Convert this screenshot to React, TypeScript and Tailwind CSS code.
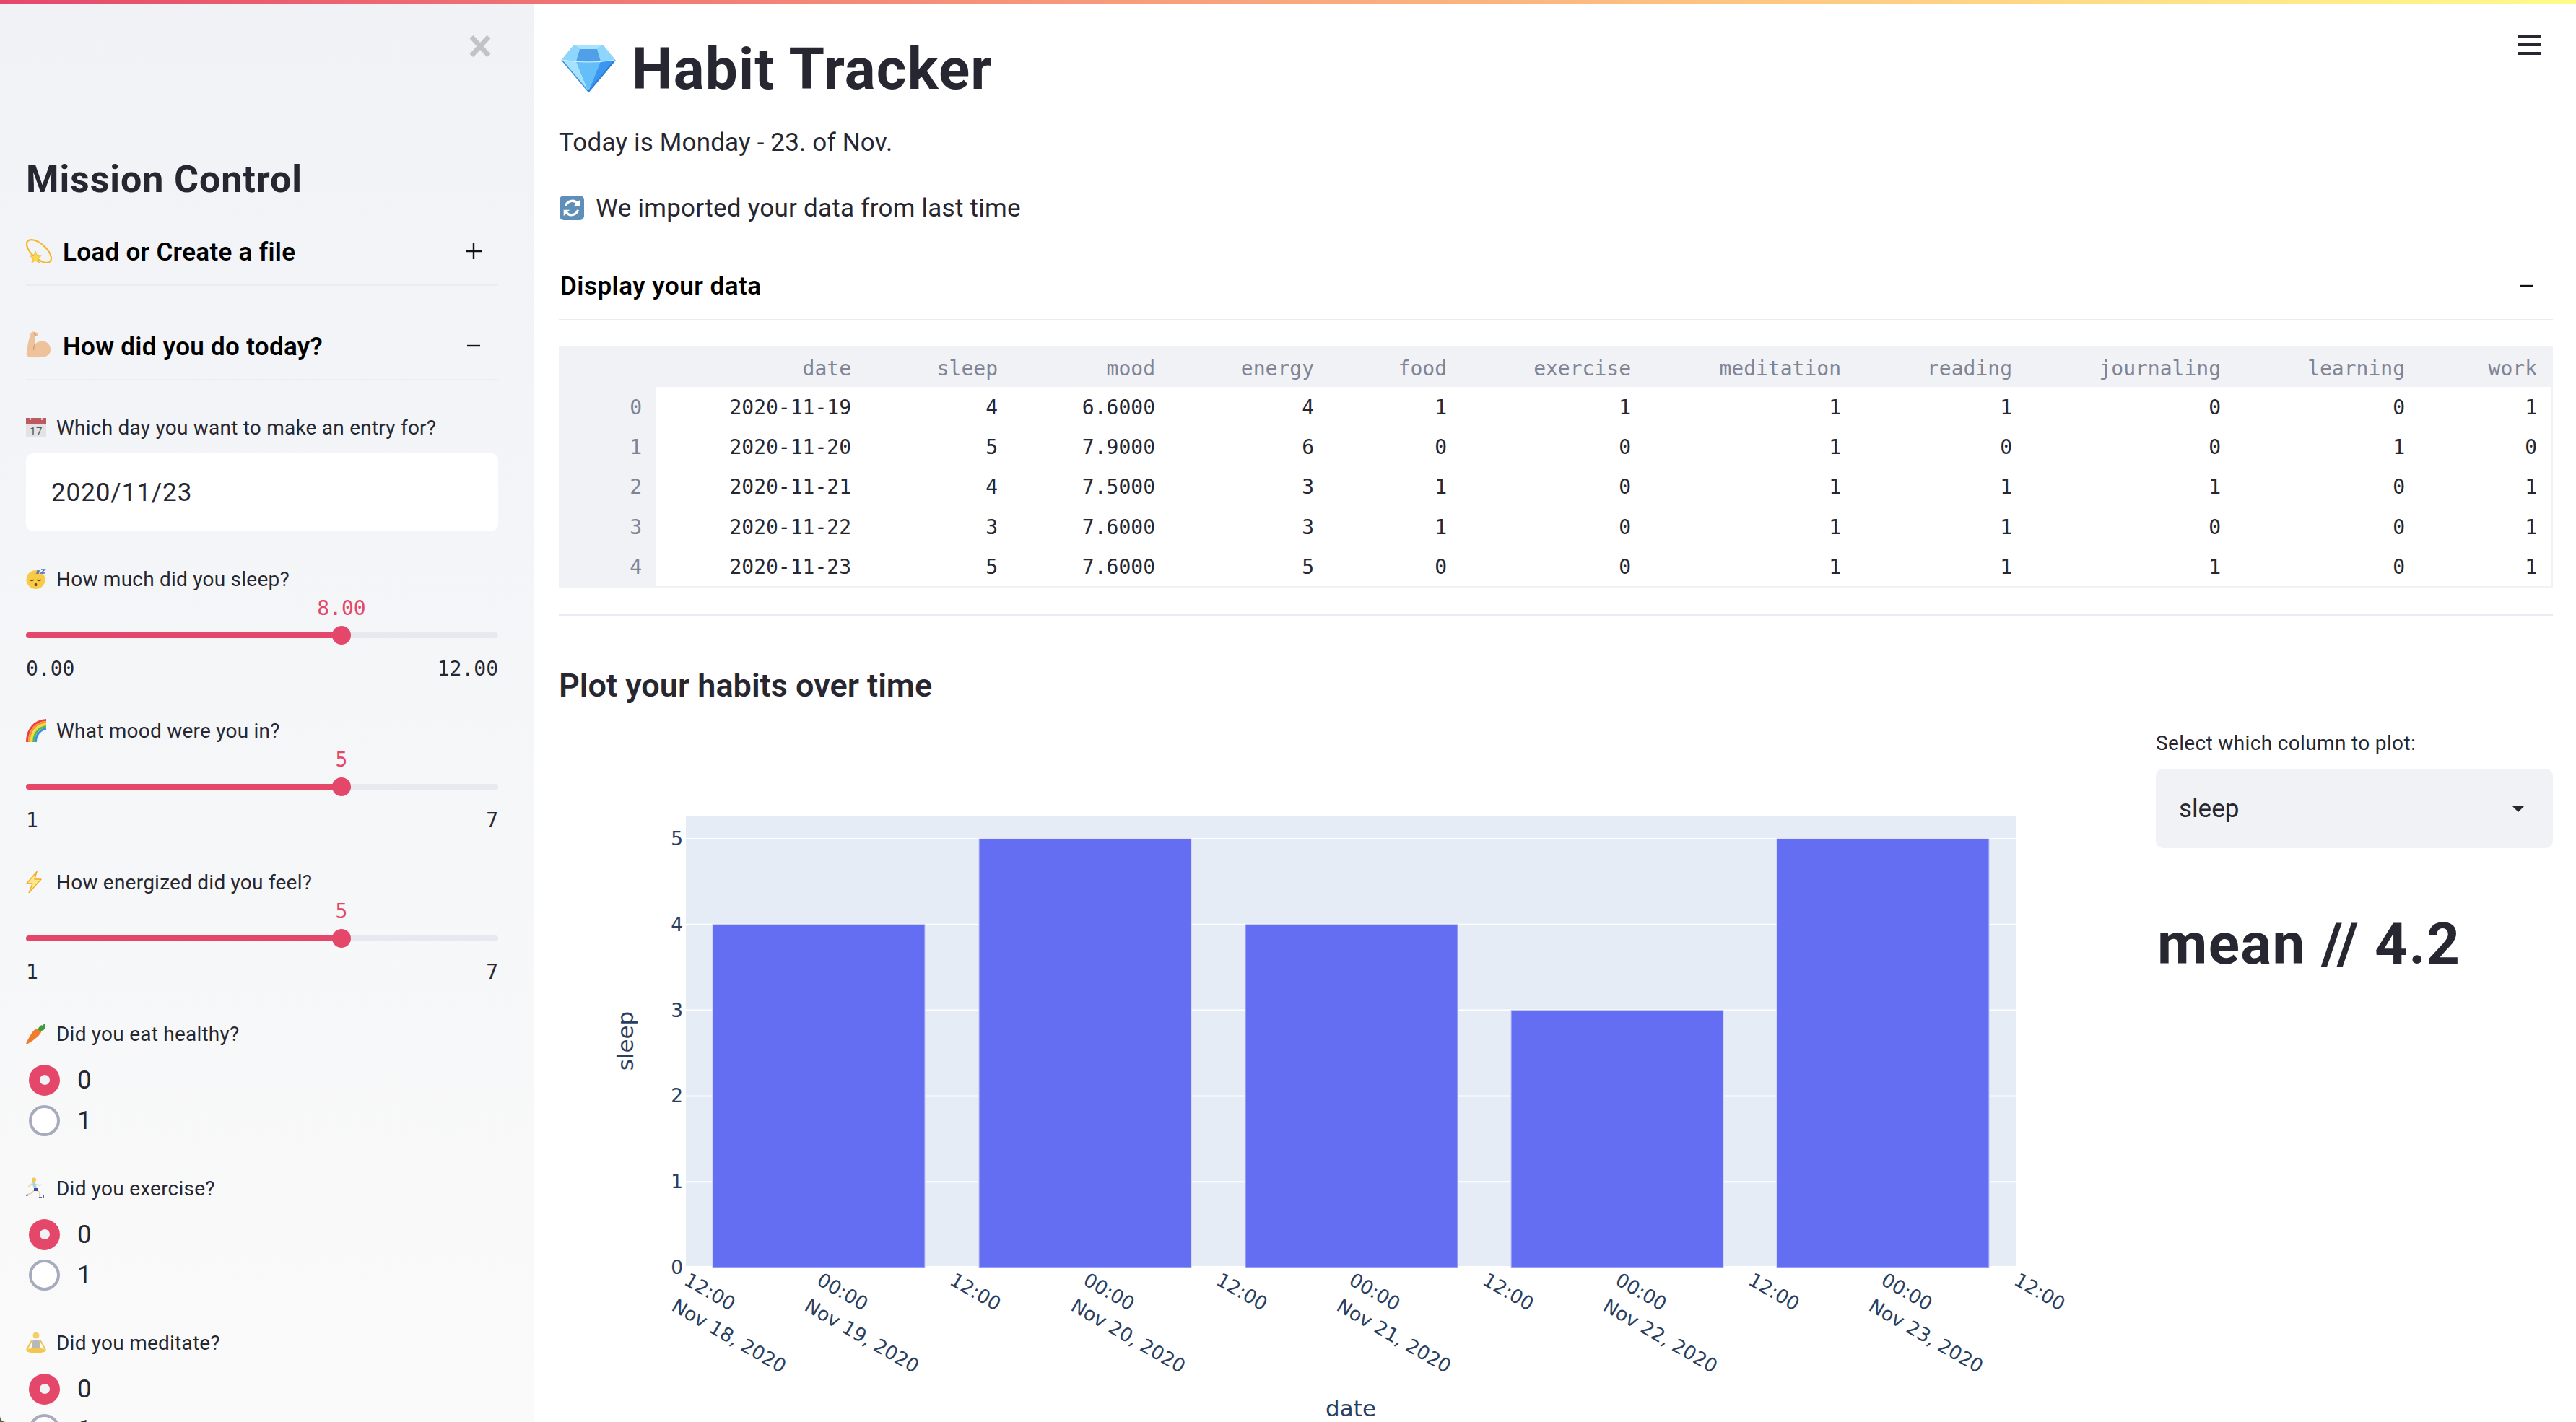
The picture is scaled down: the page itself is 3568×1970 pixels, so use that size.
import type { ReactNode } from 'react'

// --- emoji drawings (no colour emoji font in the sandbox) ---
const Dizzy = () => (
  <svg viewBox="0 0 36 40" className="w-[36px] h-[40px] shrink-0">
    <ellipse cx="18" cy="20" rx="21" ry="10" transform="rotate(42 18 20)" fill="none" stroke="#f5b82e" strokeWidth="2.2" />
    <path d="M13 20l2.5 5.5 6 .5-4.5 4 1.5 6-5.5-3-5 3 1.500-6-4.500-4 6-.5z" fill="#fbd84b" stroke="#e8a020" strokeWidth=".6" />
  </svg>
)
const Muscle = () => (
  <svg viewBox="0 0 34 40" className="w-[34px] h-[40px] shrink-0">
    <path d="M8 1c3-1 7 0 8 2 1 2 0 4-2 4l-2 0c0 3 0 7 1 10 3-3 8-4 12-3 5 1 9 5 9 11 0 6-3 9-8 10-7 1-17 2-23 0-2-1-3-3-2-6 1-7 2-15 4-21 1-3 1-5 3-7z" fill="#eec39b" />
    <path d="M13 17c-2 3-3 6-2 9M11 3l3 3" fill="none" stroke="#cf9a6c" strokeWidth="1.200" />
  </svg>
)
const Calendar = () => (
  <svg viewBox="0 0 28 28" className="w-[28px] h-[28px] shrink-0">
    <rect x="0" y="1" width="28" height="27" fill="#e3e3e3" />
    <rect x="0" y="1" width="28" height="9" fill="#bd5a5f" />
    <circle cx="6" cy="2.500" r="1.300" fill="#fff" />
    <circle cx="22" cy="2.500" r="1.300" fill="#fff" />
    <text x="14" y="25" textAnchor="middle" fontSize="15" fill="#555" fontFamily="Roboto, sans-serif">17</text>
  </svg>
)
const Sleeping = () => (
  <svg viewBox="0 0 28 28" className="w-[28px] h-[28px] shrink-0">
    <circle cx="13.500" cy="15" r="13" fill="#f9cb45" />
    <path d="M5 15c2 2 4 2 6 0M15 15c2 2 4 2 6 0" fill="none" stroke="#6a4a22" strokeWidth="1.400" />
    <ellipse cx="13.500" cy="22" rx="2" ry="2.300" fill="#7a4b22" />
    <path d="M15 3h3l-3 3h3M21 1h5l-5 5h5" fill="none" stroke="#4a6fd8" strokeWidth="1.500" />
  </svg>
)
const Rainbow = () => (
  <svg viewBox="0 0 28 32" className="w-[28px] h-[32px] shrink-0">
    <path d="M1.500 32C1.500 14 12 2.500 28 1.500" fill="none" stroke="#e8423c" strokeWidth="3" />
    <path d="M4.500 32C4.500 16 14 5.500 28 4.500" fill="none" stroke="#f6982a" strokeWidth="3" />
    <path d="M7.500 32C7.500 18 16 8.500 28 7.500" fill="none" stroke="#f9d838" strokeWidth="3" />
    <path d="M10.500 32C10.500 20 18 11.500 28 10.500" fill="none" stroke="#55bb4a" strokeWidth="3" />
    <path d="M13.500 32C13.500 22 20 14.500 28 13.500" fill="none" stroke="#3f8ee8" strokeWidth="3" />
  </svg>
)
const Bolt = () => (
  <svg viewBox="0 0 22 30" className="w-[22px] h-[30px] shrink-0">
    <path d="M15 0.500L1 17h8L4 30 21 11h-9z" fill="#fde98a" stroke="#f4a821" strokeWidth="1.300" strokeLinejoin="round" />
  </svg>
)
const Carrot = () => (
  <svg viewBox="0 0 28 30" className="w-[28px] h-[30px] shrink-0">
    <path d="M17 8c3 0 5 2 4 5C18 19 8 26 1 30c-1 0-1-1-1-1C3 22 9 11 13 9c1-1 3-1 4-1z" fill="#ef7d2c" />
    <path d="M17 9c0-3 2-4 3-4 0-2 2-2 3-1 1-2 3-3 4-3 0 3 0 5-1 7-1 2-3 3-5 3-2 0-4-1-4-2z" fill="#3f9a3b" />
  </svg>
)
const Runner = () => (
  <svg viewBox="0 0 26 30" className="w-[26px] h-[30px] shrink-0">
    <circle cx="11" cy="3.500" r="3" fill="#f2c84f" />
    <path d="M10 7l3 8 1 3" fill="none" stroke="#9fd6e0" strokeWidth="4" />
    <path d="M12 17l-4 5-7 2M13 17l6 4 0 7" fill="none" stroke="#f0cfa8" strokeWidth="1.800" />
    <path d="M10 8l-5 3-2 3M12 9l6 2 3-1" fill="none" stroke="#f0cfa8" strokeWidth="1.500" />
    <path d="M11 15h5l0 4h-5z" fill="#3e4aa5" />
    <path d="M0 25l3-.5M18 28h4M24 24v5" fill="none" stroke="#2a3a80" strokeWidth="1.500" />
  </svg>
)
const Meditate = () => (
  <svg viewBox="0 0 28 30" className="w-[28px] h-[30px] shrink-0">
    <circle cx="14" cy="5" r="4.500" fill="#f2cf6a" />
    <path d="M9.500 11h9l1.500 11H8z" fill="#b8b8b8" />
    <path d="M9 11C6 15 4 20 1 25M19 11c3 4 5 9 8 14" fill="none" stroke="#f0c75a" strokeWidth="2.200" />
    <ellipse cx="14" cy="26" rx="13.500" ry="3.500" fill="#f1c84e" />
  </svg>
)
const Diamond = () => (
  <svg viewBox="0 0 76 67" className="w-[76px] h-[67px] shrink-0">
    <path d="M18 1h40l17 21L38 66 1 22z" fill="#58b6f7" />
    <path d="M26 7h24l5 17H21z" fill="#4f9fe9" />
    <path d="M18 1L1 22l20 2 5-17zM58 1l17 21-20 2-5-17z" fill="#8fd6fc" />
    <path d="M18 1h40l-8 6H26z" fill="#a9e2fd" />
    <path d="M1 22l20 2 17 42z" fill="#a6e2fe" />
    <path d="M75 22l-20 2-17 42z" fill="#3a96ee" />
    <path d="M21 24h34L38 66z" fill="#64bff8" />
    <path d="M1 22l37 44" stroke="#3c8fe0" strokeWidth="1.500" />
    <path d="M75 22L38 66" stroke="#2a7cd6" strokeWidth="2" />
    <path d="M1 22q37 6 74 0" fill="none" stroke="#d2f1ff" strokeWidth="1.200" />
  </svg>
)
const Refresh = () => (
  <svg viewBox="0 0 36 36" className="w-[36px] h-[34px] shrink-0">
    <rect x="0" y="0" width="36" height="36" rx="6" fill="#5f8fb8" />
    <path d="M9 15a10 10 0 0 1 17-4" fill="none" stroke="#fff" strokeWidth="3.500" />
    <path d="M30 6v9h-9z" fill="#fff" />
    <path d="M27 21a10 10 0 0 1-17 4" fill="none" stroke="#fff" strokeWidth="3.500" />
    <path d="M6 30v-9h9z" fill="#fff" />
  </svg>
)

// --- sidebar widgets ---
const Label = ({ icon, text }: { icon: ReactNode; text: string }) => (
  <div className="flex items-center h-[40px] text-[28px] tracking-[0.23px] text-[#262730]">
    <span className="w-[42px] shrink-0 flex items-center">{icon}</span>
    <span className="pt-[2px]">{text}</span>
  </div>
)

const Sign = ({ open }: { open: boolean }) => (
  <svg viewBox="0 0 22 22" className="w-[22px] h-[22px] mr-[23px] shrink-0">
    <path d={open ? 'M2 11h18' : 'M0 11h22M11 0v22'} stroke="#111" strokeWidth="2.400" />
  </svg>
)

const Expander = ({ icon, title, open }: { icon: ReactNode; title: string; open: boolean }) => (
  <div className="h-[78px] border-b-2 border-[#e9ecf2]">
    <div className="h-[60px] flex items-center text-[35px] font-semibold tracking-[0.3px] text-black">
      <span className="w-[51px] shrink-0 flex items-center">{icon}</span>
      <span className="flex-1 pt-[4px]">{title}</span>
      <Sign open={open} />
    </div>
  </div>
)

const Slider = ({ icon, label, value, min, max }: { icon: ReactNode; label: string; value: string; min: string; max: string }) => (
  <div className="mt-[46px]">
    <Label icon={icon} text={label} />
    <div className="relative h-[40px] -mt-px text-[28px] text-[#e5476b] font-['DejaVu_Sans_Mono',monospace]">
      <span className="absolute left-[437px] top-[1px] -translate-x-1/2">{value}</span>
    </div>
    <div className="relative h-[30px] mt-[4px] flex items-center">
      <div className="w-full h-[8px] rounded-full bg-[#e6e9ef]">
        <div className="h-full w-[437px] rounded-full bg-[#e5476b]" />
      </div>
      <div className="absolute left-[424px] top-[2px] w-[26px] h-[26px] rounded-full bg-[#e5476b]" />
    </div>
    <div className="h-[40px] mt-[11px] pt-[2px] flex items-center justify-between text-[28px] text-[#262730] font-['DejaVu_Sans_Mono',monospace]">
      <span>{min}</span>
      <span>{max}</span>
    </div>
  </div>
)

const RadioRow = ({ value, checked }: { value: string; checked: boolean }) => (
  <div className="h-[56px] flex items-center pl-[4px] text-[35px] text-[#262730]">
    {checked ? (
      <span className="w-[43px] h-[43px] rounded-full bg-[#e5476b] flex items-center justify-center shrink-0">
        <span className="w-[14px] h-[14px] rounded-full bg-[#f0f2f6]" />
      </span>
    ) : (
      <span className="w-[43px] h-[43px] rounded-full bg-white border-[4px] border-[#a6acbd] shrink-0" />
    )}
    <span className="ml-[24px] pt-[2px]">{value}</span>
  </div>
)

const Radio = ({ icon, label }: { icon: ReactNode; label: string }) => (
  <div className="mt-[46px]">
    <Label icon={icon} text={label} />
    <div className="mt-[16px]">
      <RadioRow value="0" checked />
      <RadioRow value="1" checked={false} />
    </div>
  </div>
)

const Sidebar = () => (
  <aside className="w-[740px] h-full shrink-0 bg-gradient-to-b from-[#f0f2f6] to-[#fafafa] overflow-hidden">
    <div className="pt-[48px] h-[80px] flex justify-end pr-[60px]">
      <svg viewBox="0 0 30 32" className="w-[30px] h-[32px]">
        <path d="M3 3l24 26M27 3L3 29" stroke="#c2c3c8" strokeWidth="7" />
      </svg>
    </div>
    <div className="pl-[36px] pr-[50px]">
      <h2 className="mt-[137px] h-[60px] pt-[3px] flex items-center text-[52px] font-bold tracking-[0.9px] text-[#262730]">Mission Control</h2>
      <div className="mt-[41px]">
        <Expander icon={<Dizzy />} title="Load or Create a file" open={false} />
      </div>
      <div className="mt-[53px]">
        <Expander icon={<Muscle />} title="How did you do today?" open />
      </div>
      <div className="mt-[45px]">
        <Label icon={<Calendar />} text="Which day you want to make an entry for?" />
      </div>
      <div className="mt-[16px] h-[108px] pt-[3px] rounded-[10px] bg-white flex items-center pl-[35px] text-[35px] tracking-[0.9px] text-[#262730]">
        2020/11/23
      </div>
      <Slider icon={<Sleeping />} label="How much did you sleep?" value="8.00" min="0.00" max="12.00" />
      <Slider icon={<Rainbow />} label="What mood were you in?" value="5" min="1" max="7" />
      <Slider icon={<Bolt />} label="How energized did you feel?" value="5" min="1" max="7" />
      <Radio icon={<Carrot />} label="Did you eat healthy?" />
      <Radio icon={<Runner />} label="Did you exercise?" />
      <Radio icon={<Meditate />} label="Did you meditate?" />
    </div>
  </aside>
)

// --- data table ---
const COLUMNS = ['date', 'sleep', 'mood', 'energy', 'food', 'exercise', 'meditation', 'reading', 'journaling', 'learning', 'work']
const ROWS = [
  ['2020-11-19', '4', '6.6000', '4', '1', '1', '1', '1', '0', '0', '1'],
  ['2020-11-20', '5', '7.9000', '6', '0', '0', '1', '0', '0', '1', '0'],
  ['2020-11-21', '4', '7.5000', '3', '1', '0', '1', '1', '1', '0', '1'],
  ['2020-11-22', '3', '7.6000', '3', '1', '0', '1', '1', '0', '0', '1'],
  ['2020-11-23', '5', '7.6000', '5', '0', '0', '1', '1', '1', '0', '1'],
]

const DataTable = () => (
  <div className="mt-[36px] border-b-2 border-r-2 border-[#f0f2f6] font-['DejaVu_Sans_Mono',monospace] text-[28px]">
    <div className="grid grid-cols-[134px_291px_203px_218px_220px_184px_255px_291px_237px_289px_255px_1fr] h-[56px] pt-[5px] bg-[#f0f2f6] text-[#808495] items-center text-right">
      <span />
      {COLUMNS.map((c) => (
        <span key={c} className="pr-[20px]">{c}</span>
      ))}
    </div>
    {ROWS.map((row, i) => (
      <div key={i} className="grid grid-cols-[134px_291px_203px_218px_220px_184px_255px_291px_237px_289px_255px_1fr] h-[55.2px] items-center text-right text-[#262730]">
        <span className="h-full pt-[3px] flex items-center justify-end pr-[19px] bg-[#f0f2f6] text-[#808495]">{i}</span>
        {row.map((v, j) => (
          <span key={j} className="pr-[20px] pt-[3px]">{v}</span>
        ))}
      </div>
    ))}
  </div>
)

// --- chart, coordinates are page pixels through the viewBox ---
const BARS = [
  { x: 987, v: 4 },
  { x: 1356, v: 5 },
  { x: 1725, v: 4 },
  { x: 2093, v: 3 },
  { x: 2461, v: 5 },
]
const Y0 = 1755
const STEP = 118.8
const TICKS = [
  { x: 950, t: '12:00', d: 'Nov 18, 2020' },
  { x: 1134, t: '00:00', d: 'Nov 19, 2020' },
  { x: 1318, t: '12:00' },
  { x: 1503, t: '00:00', d: 'Nov 20, 2020' },
  { x: 1687, t: '12:00' },
  { x: 1871, t: '00:00', d: 'Nov 21, 2020' },
  { x: 2056, t: '12:00' },
  { x: 2240, t: '00:00', d: 'Nov 22, 2020' },
  { x: 2424, t: '12:00' },
  { x: 2608, t: '00:00', d: 'Nov 23, 2020' },
  { x: 2792, t: '12:00' },
]

const Chart = () => (
  <svg viewBox="774 984 2186 986" className="w-[2186px] h-[986px] shrink-0 font-['DejaVu_Sans',sans-serif]">
    <rect x="950" y="1130" width="1842" height="623" fill="#e5ecf6" />
    {[1, 2, 3, 4, 5].map((n) => (
      <line key={n} x1="950" x2="2792" y1={Y0 - n * STEP} y2={Y0 - n * STEP} stroke="#fff" strokeWidth="2" />
    ))}
    {BARS.map((b) => (
      <rect key={b.x} x={b.x} y={Y0 - b.v * STEP} width="294" height={b.v * STEP} fill="#646ef3" stroke="#c3c8f8" strokeWidth="1" />
    ))}
    {[0, 1, 2, 3, 4, 5].map((n) => (
      <text key={n} x="946" y={Y0 - n * STEP + 9} textAnchor="end" fontSize="26.400" fill="#2a3f5f">{n}</text>
    ))}
    {TICKS.map((k, i) => (
      <text key={i} transform={`rotate(30 ${k.x} 1780)`} x={k.x - 5} y="1780" fontSize="26.400" fill="#2a3f5f">
        <tspan>{k.t}</tspan>
        {k.d && (
          <tspan x={k.x - 2} dy="39.600">{k.d}</tspan>
        )}
      </text>
    ))}
    <text transform="rotate(-90 877 1441)" x="877" y="1441" textAnchor="middle" fontSize="31" fill="#2a3f5f">sleep</text>
    <text x="1871" y="1961" textAnchor="middle" fontSize="31" fill="#2a3f5f">date</text>
  </svg>
)

export default function App() {
  return (
    <div className="relative w-[3568px] h-[1970px] flex overflow-hidden bg-white font-['Roboto',sans-serif] text-[#262730]">
      <div className="absolute inset-x-0 top-0 h-[5px] bg-gradient-to-r from-[#e5476c] to-[#fffb8b]" />
      <svg viewBox="0 0 8 8" className="absolute left-0 bottom-0 w-[8px] h-[8px]">
        <path d="M0 0A8 8 0 0 0 8 8H0z" fill="#5c5c3c" />
      </svg>
      <Sidebar />
      <main className="relative flex-1 min-w-0 pl-[34px] pr-[32px]">
        <div className="absolute right-[48px] top-[48px] flex flex-col gap-[8px]">
          <span className="block w-[32px] h-[4px] bg-[#262730]" />
          <span className="block w-[32px] h-[4px] bg-[#262730]" />
          <span className="block w-[32px] h-[4px] bg-[#262730]" />
        </div>
        <h1 className="pt-[44px] h-[144px] flex items-center gap-[22px] text-[80px] font-bold tracking-[1.2px]">
          <span className="ml-[3px]"><Diamond /></span>
          <span className="pt-[4px]">Habit Tracker</span>
        </h1>
        <p className="mt-[28px] h-[50px] pt-[2px] flex items-center text-[35px] tracking-[0.18px]">Today is Monday - 23. of Nov.</p>
        <p className="mt-[41px] h-[50px] flex items-center gap-[15px] text-[35px] tracking-[0.25px]">
          <Refresh />
          <span className="pt-[2px]">We imported your data from last time</span>
        </p>
        <div className="mt-[53px] h-[78px] border-b-2 border-[#e9ecf2]">
          <div className="h-[60px] flex items-center justify-between pl-[2px] pr-[2px] text-[35px] font-semibold tracking-[0.5px] text-black">
            <span className="pt-[3px]">Display your data</span>
            <Sign open />
          </div>
        </div>
        <DataTable />
        <div className="mt-[37px] h-[2px] bg-[#e9ecf2]" />
        <h3 className="mt-[62px] h-[70px] flex items-center text-[45px] font-semibold">Plot your habits over time</h3>
        <div className="flex justify-between">
          <Chart />
          <div className="w-[550px] shrink-0">
            <div className="mt-[24px] h-[40px] pt-[2px] flex items-center text-[28px] tracking-[0.35px]">Select which column to plot:</div>
            <div className="mt-[16px] h-[110px] pt-[2px] rounded-[10px] bg-[#f0f2f6] flex items-center justify-between pl-[32px] pr-[40px] text-[35px]">
              sleep
              <span className="w-0 h-0 border-x-[8px] border-x-transparent border-t-[8px] border-t-[#262730]" />
            </div>
            <div className="mt-[82px] h-[100px] pt-[3px] flex items-center pl-[2px] text-[80px] font-bold tracking-[1.4px]">mean // 4.2</div>
          </div>
        </div>
      </main>
    </div>
  )
}
